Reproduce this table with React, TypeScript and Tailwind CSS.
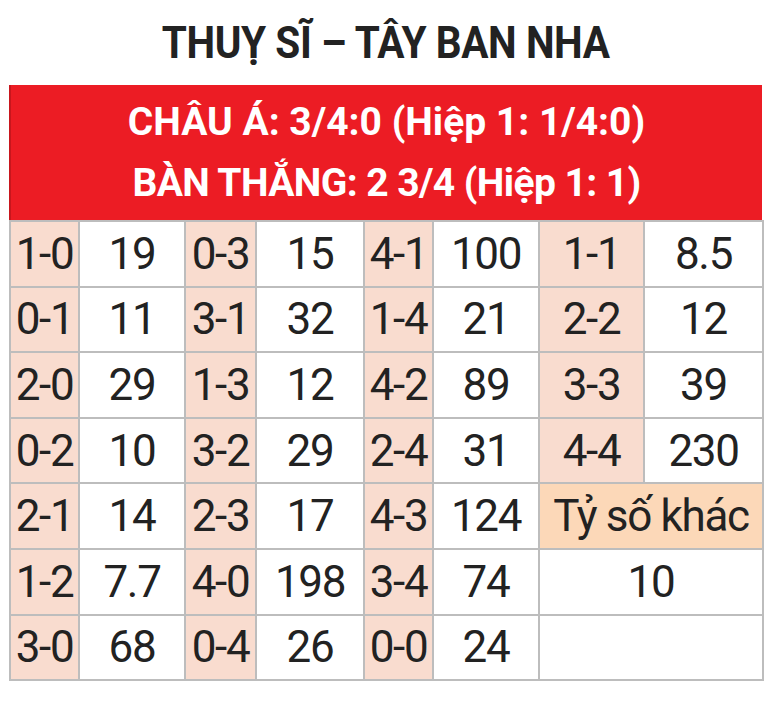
import React from 'react';

type Cell = { text: string; kind: 'score' | 'odd' | 'other' | 'blank'; span?: number };

const rows: Cell[][] = [
  [
    { text: '1-0', kind: 'score' }, { text: '19', kind: 'odd' },
    { text: '0-3', kind: 'score' }, { text: '15', kind: 'odd' },
    { text: '4-1', kind: 'score' }, { text: '100', kind: 'odd' },
    { text: '1-1', kind: 'score' }, { text: '8.5', kind: 'odd' },
  ],
  [
    { text: '0-1', kind: 'score' }, { text: '11', kind: 'odd' },
    { text: '3-1', kind: 'score' }, { text: '32', kind: 'odd' },
    { text: '1-4', kind: 'score' }, { text: '21', kind: 'odd' },
    { text: '2-2', kind: 'score' }, { text: '12', kind: 'odd' },
  ],
  [
    { text: '2-0', kind: 'score' }, { text: '29', kind: 'odd' },
    { text: '1-3', kind: 'score' }, { text: '12', kind: 'odd' },
    { text: '4-2', kind: 'score' }, { text: '89', kind: 'odd' },
    { text: '3-3', kind: 'score' }, { text: '39', kind: 'odd' },
  ],
  [
    { text: '0-2', kind: 'score' }, { text: '10', kind: 'odd' },
    { text: '3-2', kind: 'score' }, { text: '29', kind: 'odd' },
    { text: '2-4', kind: 'score' }, { text: '31', kind: 'odd' },
    { text: '4-4', kind: 'score' }, { text: '230', kind: 'odd' },
  ],
  [
    { text: '2-1', kind: 'score' }, { text: '14', kind: 'odd' },
    { text: '2-3', kind: 'score' }, { text: '17', kind: 'odd' },
    { text: '4-3', kind: 'score' }, { text: '124', kind: 'odd' },
    { text: 'Tỷ số khác', kind: 'other', span: 2 },
  ],
  [
    { text: '1-2', kind: 'score' }, { text: '7.7', kind: 'odd' },
    { text: '4-0', kind: 'score' }, { text: '198', kind: 'odd' },
    { text: '3-4', kind: 'score' }, { text: '74', kind: 'odd' },
    { text: '10', kind: 'odd', span: 2 },
  ],
  [
    { text: '3-0', kind: 'score' }, { text: '68', kind: 'odd' },
    { text: '0-4', kind: 'score' }, { text: '26', kind: 'odd' },
    { text: '0-0', kind: 'score' }, { text: '24', kind: 'odd' },
    { text: '', kind: 'blank', span: 2 },
  ],
];

const colWidths = [69, 106, 71, 108, 69, 106, 105, 119];

const bg: Record<Cell['kind'], string> = {
  score: 'bg-[#f9dccf]',
  odd: 'bg-white',
  other: 'bg-[#fcd8b8]',
  blank: 'bg-white',
};

export default function App() {
  return (
    <div className="min-h-[713px] w-[780px] bg-white font-['Roboto',sans-serif] text-[#222]">
      <div className="ml-[9px] w-[753px]">
        {/* match title */}
        <div className="flex h-[85px] items-center justify-center pb-[1px]">
          <h1 className="inline-block scale-x-[0.9] text-[45px] font-bold leading-none tracking-[-0.01em] text-[#222]">
            THUỴ SĨ – TÂY BAN NHA
          </h1>
        </div>

        {/* handicap banner */}
        <div className="flex h-[135px] flex-col items-center justify-center border-l-2 border-[#c8161d] bg-[#ec1c24] text-white">
          <p className="text-[39px] font-bold leading-[61px]">CHÂU Á: 3/4:0 (Hiệp 1: 1/4:0)</p>
          <p className="text-[39px] font-bold leading-[61px] tracking-[-0.015em]">BÀN THẮNG: 2 3/4 (Hiệp 1: 1)</p>
        </div>

        {/* correct score odds */}
        <table className="w-[753px] table-fixed border-collapse">
          <colgroup>
            {colWidths.map((w, i) => (
              <col key={i} style={{ width: w }} />
            ))}
          </colgroup>
          <tbody>
            {rows.map((row, r) => (
              <tr key={r} className="h-[65.6px]">
                {row.map((c, i) => (
                  <td
                    key={i}
                    colSpan={c.span}
                    className={`border-2 border-[#bdbdbd] p-0 text-center align-middle text-[44px] leading-none tracking-[-0.03em] ${bg[c.kind]}`}
                  >
                    {c.text}
                  </td>
                ))}
              </tr>
            ))}
          </tbody>
        </table>
      </div>
    </div>
  );
}
